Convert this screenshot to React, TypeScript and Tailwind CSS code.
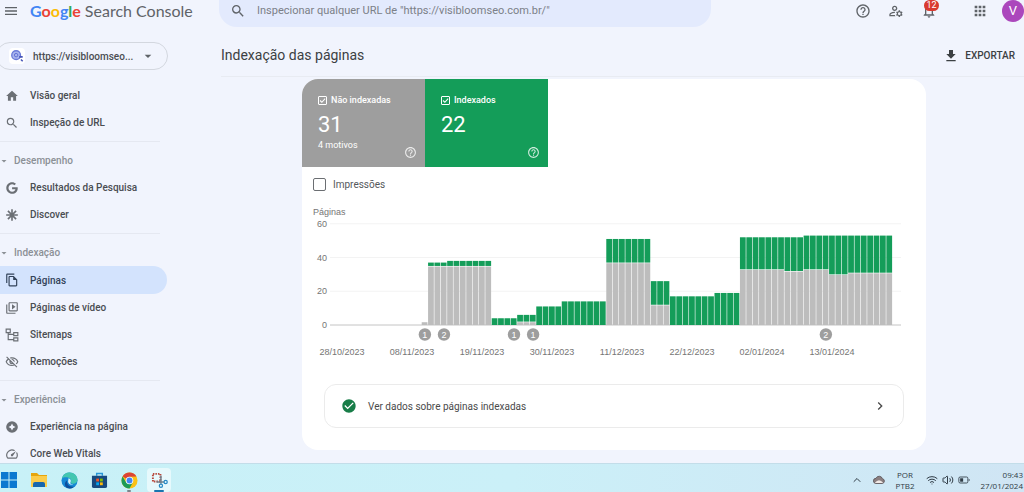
import React from 'react';
import {
  MdApps,
  MdArrowDropDown,
  MdCheckCircle,
  MdChevronRight,
  MdFileDownload,
  MdHelpOutline,
  MdHome,
  MdMenu,
  MdNotificationsNone,
  MdOutlineFileCopy,
  MdOutlineManageAccounts,
  MdOutlineSpeed,
  MdOutlineVideoLibrary,
  MdOutlineVisibilityOff,
  MdSearch,
} from 'react-icons/md';
import { FaGoogle } from 'react-icons/fa';
import { ChevronUp, Volume2, Wifi } from 'lucide-react';

type IconType = React.ComponentType<{ className?: string }>;

const DiscoverIcon: IconType = ({ className }) => (
  <svg viewBox="0 0 24 24" className={className} stroke="currentColor" strokeWidth="2.8" fill="none">
    <path d="M12 2v20M2 12h20M5 5l14 14M19 5L5 19" />
  </svg>
);

const SitemapIcon: IconType = ({ className }) => (
  <svg viewBox="0 0 24 24" className={className} stroke="currentColor" strokeWidth="2" fill="none">
    <path d="M2 2h7v6H2zM15 8h7v5h-7zM15 17h7v5h-7zM5.500 8v12H15M5.500 11H15" />
  </svg>
);

const GoogleIcon: IconType = ({ className }) => (
  <span className={`flex items-center justify-center ${className}`}>
    <FaGoogle className="h-3 w-3" />
  </span>
);

const ExperienceIcon: IconType = ({ className }) => (
  <svg viewBox="0 0 24 24" className={className}>
    <path
      fill="currentColor"
      fillRule="evenodd"
      d="M12 2a10 10 0 1 0 0 20 10 10 0 0 0 0-20zm0 4l2 4 4 2-4 2-2 4-2-4-4-2 4-2z"
    />
  </svg>
);

type Item = { label: string; icon: IconType; active?: boolean };
type Group = { title?: string; items: Item[] };

const groups: Group[] = [
  {
    items: [
      { label: 'Visão geral', icon: MdHome },
      { label: 'Inspeção de URL', icon: MdSearch },
    ],
  },
  {
    title: 'Desempenho',
    items: [
      { label: 'Resultados da Pesquisa', icon: GoogleIcon },
      { label: 'Discover', icon: DiscoverIcon },
    ],
  },
  {
    title: 'Indexação',
    items: [
      { label: 'Páginas', icon: MdOutlineFileCopy, active: true },
      { label: 'Páginas de vídeo', icon: MdOutlineVideoLibrary },
      { label: 'Sitemaps', icon: SitemapIcon },
      { label: 'Remoções', icon: MdOutlineVisibilityOff },
    ],
  },
  {
    title: 'Experiência',
    items: [
      { label: 'Experiência na página', icon: ExperienceIcon },
      { label: 'Core Web Vitals', icon: MdOutlineSpeed },
    ],
  },
];

// [days, not indexed, total]
const runs: [number, number, number][] = [
  [1, 2, 2],
  [3, 35, 37],
  [7, 35, 38],
  [4, 0, 4],
  [3, 2, 6],
  [4, 0, 11],
  [7, 0, 14],
  [7, 37, 51],
  [3, 12, 26],
  [7, 0, 17],
  [4, 0, 19],
  [7, 33, 52],
  [3, 32, 52],
  [4, 33, 53],
  [3, 30, 53],
  [7, 31, 53],
];

const days = runs.flatMap(([count, grey, total]) => Array.from({ length: count }, () => ({ grey, total })));

const dates = [
  '28/10/2023',
  '08/11/2023',
  '19/11/2023',
  '30/11/2023',
  '11/12/2023',
  '22/12/2023',
  '02/01/2024',
  '13/01/2024',
];

const markers = [
  { day: 0, count: 1 },
  { day: 3, count: 2 },
  { day: 14, count: 1 },
  { day: 17, count: 1 },
  { day: 63, count: 2 },
];

function Chart() {
  const step = 6.365;
  const left = 119.7;
  const base = 120;
  const unit = 1.687;

  return (
    <svg
      viewBox="0 0 624 155"
      className="block w-full font-['Liberation_Sans',sans-serif]"
      role="img"
      aria-label="Páginas"
    >
      <text x="11" y="10" fontSize="9" fill="#757575">Páginas</text>
      {[60, 40, 20, 0].map((value) => (
        <g key={value}>
          <line
            x1="28"
            x2="599"
            y1={base - value * unit}
            y2={base - value * unit}
            stroke={value === 0 ? '#c4c4c4' : '#f3f3f3'}
          />
          <text x="25" y={base - value * unit + 3} fontSize="9" fill="#757575" textAnchor="end">
            {value}
          </text>
        </g>
      ))}
      {days.map(({ grey, total }, i) => {
        const x = left + i * step;
        return (
          <g key={i}>
            {total > grey && (
              <rect x={x} y={base - total * unit} width={step - 0.6} height={(total - grey) * unit} fill="#149d59" />
            )}
            {grey > 0 && (
              <rect x={x} y={base - grey * unit + 0.6} width={step - 0.6} height={grey * unit - 0.6} fill="#bdbdbd" />
            )}
          </g>
        );
      })}
      {markers.map(({ day, count }) => (
        <g key={day}>
          <circle cx={left + (day + 0.5) * step} cy="129.500" r="6.200" fill="#9e9e9e" />
          <text x={left + (day + 0.5) * step} y="133" fontSize="9" fontWeight="500" fill="#fff" textAnchor="middle">
            {count}
          </text>
        </g>
      ))}
      {dates.map((date, i) => (
        <text key={date} x={40 + i * 70} y="150" fontSize="9" fill="#757575" textAnchor="middle">
          {date}
        </text>
      ))}
    </svg>
  );
}

function Tile({ label, value, note, color }: { label: string; value: string; note?: string; color: string }) {
  return (
    <div className={`relative flex h-[88px] w-[123px] flex-col px-4 pt-[15px] text-white ${color}`}>
      <label className="flex items-center gap-1 text-[9px] leading-3 font-medium">
        <span className="relative flex h-[9px] w-[9px]">
          <input type="checkbox" defaultChecked className="peer h-[9px] w-[9px] appearance-none rounded-[1px] border border-white" />
          <svg viewBox="0 0 10 10" className="pointer-events-none absolute inset-0 hidden peer-checked:block">
            <path d="M2.300 5l2 2 3.600-4" fill="none" stroke="#fff" strokeWidth="1.200" />
          </svg>
        </span>
        {label}
      </label>
      <span className="mt-[5px] text-[22px] leading-7">{value}</span>
      {note && <span className="text-[9px] leading-3">{note}</span>}
      <button aria-label={`Ajuda: ${label}`} className="absolute right-2 bottom-2 opacity-80">
        <MdHelpOutline className="h-[13px] w-[13px]" />
      </button>
    </div>
  );
}

function Header() {
  return (
    <header className="flex h-[27px] shrink-0 items-start text-[#5f6368]">
      <div className="flex h-[22px] w-[219px] shrink-0 items-center pl-[3px]">
        <button aria-label="Menu">
          <MdMenu className="h-4 w-4" />
        </button>
        <a href="#" className="ml-[11px] flex items-baseline gap-1 whitespace-nowrap font-['Lato',sans-serif] text-[16px] leading-5">
          <span className="font-bold">
            <span className="text-[#4285f4]">G</span>
            <span className="text-[#ea4335]">o</span>
            <span className="text-[#fbbc05]">o</span>
            <span className="text-[#4285f4]">g</span>
            <span className="text-[#34a853]">l</span>
            <span className="text-[#ea4335]">e</span>
          </span>
          <span>Search Console</span>
        </a>
      </div>
      <label className="flex h-[27px] w-[492px] items-center rounded-b-[18px] bg-[#e3eafd] pr-4 pb-[5px] pl-[11px]">
        <MdSearch className="h-4 w-4 shrink-0" aria-label="Pesquisar" />
        <input
          type="text"
          placeholder={'Inspecionar qualquer URL de "https://visibloomseo.com.br/"'}
          className="ml-[11px] w-full bg-transparent text-[11px] outline-none placeholder:text-[#7b8087]"
        />
      </label>
      <div className="ml-auto flex h-[22px] items-center">
        <div className="flex items-center gap-[17px]">
          <button aria-label="Ajuda"><MdHelpOutline className="h-4 w-4" /></button>
          <button aria-label="Usuários"><MdOutlineManageAccounts className="h-4 w-4" /></button>
          <button aria-label="Notificações" className="relative">
            <MdNotificationsNone className="h-4 w-4" />
            <span className="absolute -top-[3px] left-[3px] flex h-[11px] w-[15px] items-center justify-center rounded-full bg-[#d93a30] text-[9px] leading-[11px] text-white">
              12
            </span>
          </button>
        </div>
        <button aria-label="Apps" className="ml-[35px]"><MdApps className="h-4 w-4" /></button>
        <button className="ml-[14px] h-[22px] w-[22px] rounded-full bg-[#ab47bc] text-[13px] leading-[22px] text-white">V</button>
      </div>
    </header>
  );
}

function Sidebar() {
  return (
    <aside className="w-[221px] shrink-0 pt-[15px] text-[10px]">
      <div className="relative -ml-1 flex h-7 w-[172px] items-center rounded-full border border-[#d3d7df]">
        <span className="ml-3 flex h-4 w-4 items-center justify-center rounded-sm bg-white">
          <svg viewBox="0 0 16 16" className="h-3.5 w-3.5" fill="none">
            <circle cx="7" cy="7" r="5" fill="#a9b5ee" stroke="#6878d8" strokeWidth="1.500" />
            <circle cx="7" cy="7" r="2" stroke="#5867cf" />
            <path d="M10.500 9h4M12.500 12l2 2" stroke="#4655b8" strokeWidth="1.800" />
          </svg>
        </span>
        <select aria-label="Propriedade" className="ml-2 w-[126px] appearance-none bg-transparent font-medium text-[#4a4d52] outline-none">
          <option>https://visibloomseo...</option>
        </select>
        <MdArrowDropDown className="pointer-events-none absolute right-[11px] h-4 w-4 text-[#5f6368]" />
      </div>
      <nav className="mt-3 w-[167px]">
        {groups.map((group, g) => (
          <React.Fragment key={g}>
            {g > 0 && <hr className="my-[5px] w-40 border-[#e5e8f1]" />}
            {group.title && (
              <button className="flex h-[27px] w-full items-center font-medium text-[#8b9096]">
                <MdArrowDropDown className="-ml-0.5 h-3 w-3" />
                <span className="ml-1">{group.title}</span>
              </button>
            )}
            {group.items.map(({ label, icon: Icon, active }) => (
              <a
                key={label}
                href="#"
                className={`flex items-center gap-[11px] pl-[5px] font-medium ${
                  active ? 'h-7 rounded-r-full bg-[#d3e3fd] text-[#33435a]' : 'h-[27px] text-[#4a4d52]'
                }`}
              >
                <Icon className={`h-3.5 w-3.5 ${active ? '' : 'text-[#6b6f75]'}`} />
                {label}
              </a>
            ))}
          </React.Fragment>
        ))}
      </nav>
    </aside>
  );
}

function Taskbar() {
  return (
    <footer className="flex h-[29px] shrink-0 items-center justify-between border-t border-[#c3dde9] bg-linear-to-r from-[#c8f1f7] via-[#cbf0f8] to-[#d0e5f4] pt-1">
      <div className="-ml-[3px] flex items-center gap-1.5">
        <button aria-label="Iniciar" className="flex w-6 justify-center">
          <svg viewBox="0 0 16 16" className="h-4 w-4" fill="#0b78d0">
            <path d="M0 0h7.500v7.500H0zM8.500 0H16v7.500H8.500zM0 8.500h7.500V16H0zM8.500 8.500H16V16H8.500z" />
          </svg>
        </button>
        <button aria-label="Explorador de Arquivos" className="flex w-6 justify-center">
          <svg viewBox="0 0 18 16" className="h-4 w-[18px]">
            <path d="M1 1h6l2 2h8v4H1z" fill="#e5a50d" />
            <path d="M1 4h16v11H1z" fill="#fbcc4a" />
            <path d="M3 15v-3q0-2 2-2h8q2 0 2 2v3z" fill="#1767ad" />
          </svg>
        </button>
        <button aria-label="Edge" className="flex w-6 justify-center">
          <svg viewBox="0 0 18 18" className="h-[17px] w-[17px]">
            <circle cx="9" cy="9" r="8.500" fill="#1688d4" />
            <path d="M1 7C2 2.500 5.500.5 9 .5c5 0 8.500 3.500 8.500 7.500 0 3-2.500 4.500-5 4.500-1.500 0-2.500-.8-2-1.800.8-1.500.3-4-2.500-4.700C5 5.300 2.500 5.500 1 7z" fill="#43c6b0" />
            <path d="M6.500 9c-.8 4 2.500 7 7.500 6.500-2 1.700-4.500 2.200-6.500 1.800C3.500 16 3 11 6.500 9z" fill="#0d4f9e" />
            <path d="M8 6.500c2.500.5 3 3 2 4.500-.6 1 .6 2 2.800 1.700C11 14 7.500 13 7.500 10z" fill="#d9f4fa" />
          </svg>
        </button>
        <button aria-label="Microsoft Store" className="flex w-6 justify-center">
          <svg viewBox="0 0 18 18" className="h-[17px] w-[17px]">
            <path d="M6 4V1.500h6V4" fill="none" stroke="#2796d8" strokeWidth="1.500" />
            <path d="M1 4h16v11q0 2-2 2H3q-2 0-2-2z" fill="#174a80" />
            <path d="M5.500 7h3v3h-3z" fill="#f35325" />
            <path d="M9.500 7h3v3h-3z" fill="#81bc06" />
            <path d="M5.500 11h3v3h-3z" fill="#05a6f0" />
            <path d="M9.500 11h3v3h-3z" fill="#ffba08" />
          </svg>
        </button>
        <button aria-label="Chrome" className="relative flex w-6 justify-center">
          <svg viewBox="0 0 18 18" className="h-[17px] w-[17px]">
            <circle cx="9" cy="9" r="8.500" fill="#fbc116" />
            <path d="M9 9L1.640 4.750A8.500 8.500 0 0 1 16.360 4.750L9 5z" fill="#db4437" />
            <path d="M1.640 4.750A8.500 8.500 0 0 0 9 17.500L12.500 11 9 9 5.500 11z" fill="#1c9b57" />
            <circle cx="9" cy="9" r="4" fill="#fff" />
            <circle cx="9" cy="9" r="3.100" fill="#4285f4" />
          </svg>
          <span className="absolute -bottom-[3px] h-0.5 w-1 rounded-full bg-[#7a858c]" />
        </button>
        <button aria-label="Ferramenta de Captura" className="relative flex h-6 w-6 items-center justify-center rounded-sm bg-[#e6f9fc]">
          <svg viewBox="0 0 18 18" className="h-[17px] w-[17px]" fill="none">
            <path d="M2 2h8v8H2z" stroke="#b8493c" strokeWidth="2" strokeDasharray="1.600 1.070" />
            <path d="M10.500 4v8.500M6 10.500h8" stroke="#71818d" strokeWidth="1.600" />
            <circle cx="10.500" cy="14.500" r="1.700" stroke="#2789c4" strokeWidth="1.300" />
            <circle cx="15.500" cy="10.500" r="1.700" stroke="#2789c4" strokeWidth="1.300" />
          </svg>
          <span className="absolute bottom-0 h-0.5 w-2.5 rounded-full bg-[#1875b0]" />
        </button>
      </div>
      <div className="flex items-center pr-px text-center font-['Open_Sans',sans-serif] text-[8px] leading-[11px] text-[#2f3b45]">
        <button aria-label="Ícones ocultos"><ChevronUp className="h-3 w-3" /></button>
        <svg viewBox="0 0 14 10" className="ml-2.5 h-2.5 w-3">
          <path d="M3.500 9a3 3 0 0 1 0-6A4 4 0 0 1 11 3.500 2.800 2.800 0 0 1 11 9z" fill="#8b7f80" stroke="#5a5356" />
          <path d="M2 8.500Q7 2 12 8.500z" fill="#f1e9e6" />
        </svg>
        <span className="ml-[11px]">POR<br />PTB2</span>
        <Wifi className="ml-[11px] h-3 w-3" />
        <Volume2 className="ml-1 h-3 w-3" />
        <svg viewBox="0 0 14 10" className="ml-1 h-2.5 w-3" fill="none" stroke="currentColor">
          <rect x="1" y="1.500" width="10.500" height="7" rx="1.500" />
          <path d="M13 4v2" />
          <path d="M2.500 3h3.500v4H2.500z" fill="currentColor" stroke="none" />
        </svg>
        <time className="ml-[11px] text-right">09:43<br />27/01/2024</time>
      </div>
    </footer>
  );
}

export default function App() {
  return (
    <div className="flex h-screen flex-col overflow-hidden bg-[#f1f4fd] font-['Roboto',sans-serif]">
      <Header />
      <div className="flex min-h-0 flex-1 overflow-hidden">
        <Sidebar />
        <main className="min-w-0 flex-1">
          <div className="flex h-[50px] items-center justify-between border-b border-[#e8ebf2] pt-2 pr-[9px]">
            <h1 className="text-[14px] text-[#3c4043]">Indexação das páginas</h1>
            <button className="flex items-center gap-1.5 text-[10px] font-medium text-[#3c4043]">
              <MdFileDownload className="h-4 w-4" />
              EXPORTAR
            </button>
          </div>
          <div className="pt-0.5 pr-[98px] pl-[81px]">
            <section className="overflow-hidden rounded-2xl bg-white pb-[22px]">
              <div className="flex">
                <Tile label="Não indexadas" value="31" note="4 motivos" color="bg-[#9e9e9e]" />
                <Tile label="Indexados" value="22" color="bg-[#149d59]" />
              </div>
              <label className="mt-[11px] ml-[11px] flex w-fit items-center gap-[7px] text-[10px] leading-[13px] text-[#55585c]">
                <input type="checkbox" className="h-[13px] w-[13px] appearance-none rounded-[2px] border border-[#6b6e72]" />
                Impressões
              </label>
              <div className="mt-[14px]">
                <Chart />
              </div>
              <a
                href="#"
                className="mx-[22px] mt-6 flex h-11 items-center rounded-xl border border-[#ebebeb] pr-[15px] pl-4 text-[10px] text-[#4a4a4a]"
              >
                <MdCheckCircle className="h-4 w-4 text-[#187d48]" />
                <span className="ml-[11px]">Ver dados sobre páginas indexadas</span>
                <MdChevronRight className="ml-auto h-4 w-4" />
              </a>
            </section>
          </div>
        </main>
      </div>
      <Taskbar />
    </div>
  );
}
